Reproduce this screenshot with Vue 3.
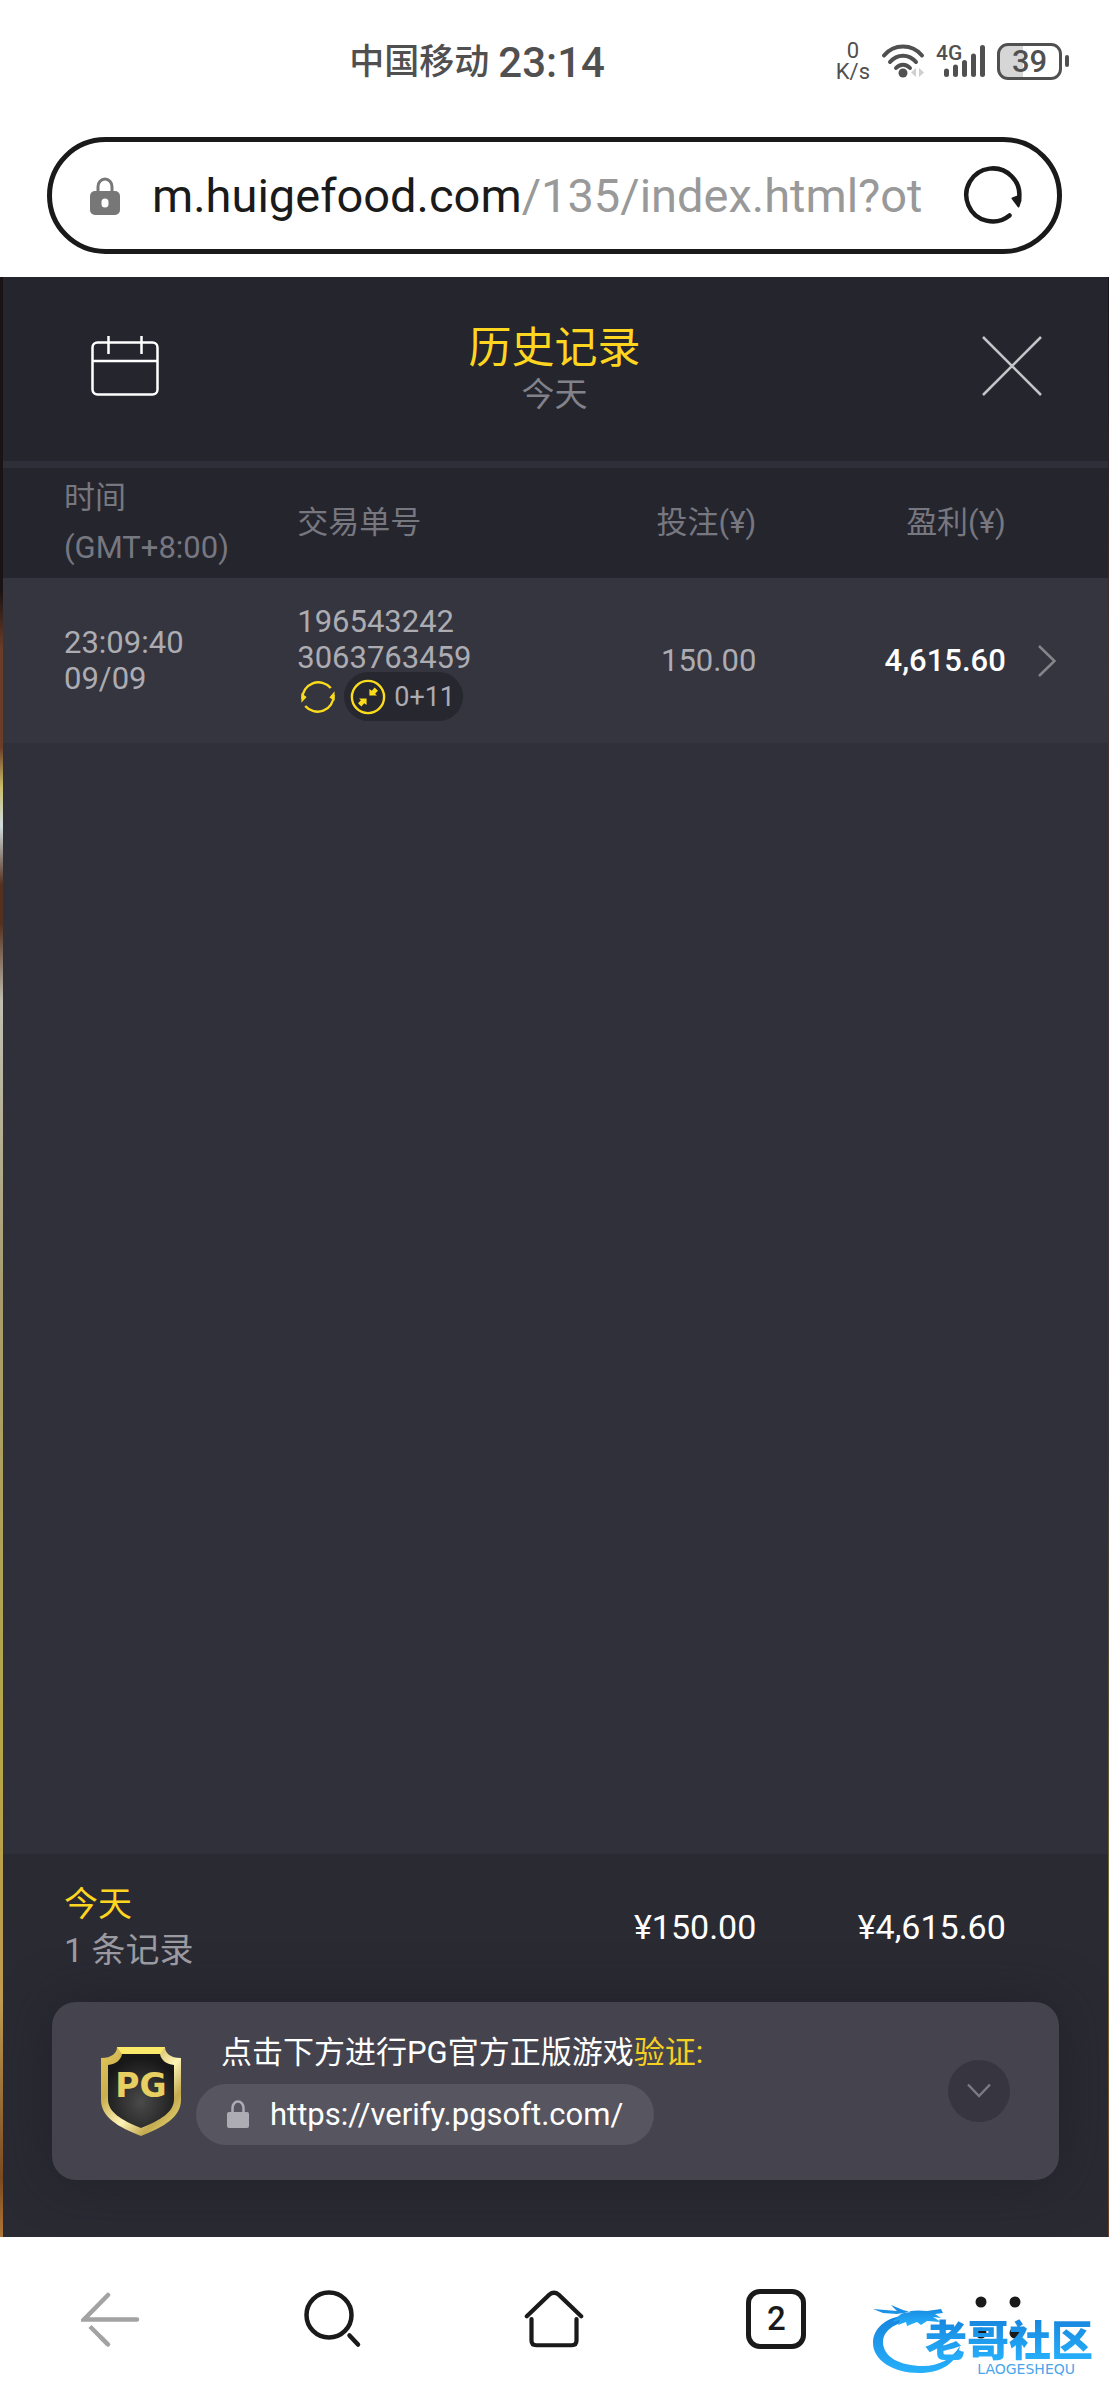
<template>
  <div class="screen">
    <header class="browser-top">
      <div class="status">
        <div class="status-left">
          <span class="carrier">中国移动</span>
          <span class="clock">23:14</span>
        </div>
        <div class="status-right">
          <div class="speed">
            <span>0</span>
            <span>K/s</span>
          </div>
          <svg class="wifi" viewBox="0 0 44 36" aria-hidden="true">
            <g fill="none" stroke="#505050" stroke-width="4" stroke-linecap="round">
              <path d="M3 12.500C13 .5 31 .5 41 12.500" />
              <path d="M9 19c7-8.500 19-8.500 26 0" />
              <path d="M15 25c4-4.500 10-4.500 14 0" />
            </g>
            <circle cx="22" cy="30" r="4.500" fill="#505050" />
            <path d="M35 25v9l-5-4.500zM38 25v9l5-4.500z" fill="#cfcfcf" />
          </svg>
          <div class="signal">
            <span class="signal-type">4G</span>
            <svg class="bars" viewBox="0 0 50 36" aria-hidden="true">
              <g stroke="#505050" stroke-width="5" stroke-linecap="round">
                <path d="M10.500 28v3.500M19.500 24v7.500M28.500 19.500v12M37.500 13v18.500M46.500 4.500v27" />
              </g>
            </svg>
          </div>
          <div class="battery">
            <span class="battery-level">{{ battery }}</span>
          </div>
        </div>
      </div>

      <div class="address">
        <svg class="address-lock" viewBox="0 0 30 38" aria-hidden="true">
          <path d="M8 16V9.500a7 7.500 0 0 1 14 0V16" fill="none" stroke="#777" stroke-width="3" />
          <rect y="14" width="30" height="24" rx="5" fill="#777" />
          <rect x="11.500" y="21.500" width="7" height="9" rx="3.500" fill="#fff" />
        </svg>
        <button class="address-text" type="button">m.huigefood.com<span>/135/index.html?ot</span></button>
        <button class="icon-btn reload" type="button" aria-label="刷新">
          <svg viewBox="0 0 60 60">
            <path d="M46.500 49.500A26.500 26.500 0 1 1 56 33" fill="none" stroke="#1a1a1a" stroke-width="4.500" stroke-linecap="round" />
            <path d="M49.500 32.500l7.500-3 .5 5-2 6z" fill="#1a1a1a" stroke="#1a1a1a" stroke-width="2" stroke-linejoin="round" />
          </svg>
        </button>
      </div>
    </header>

    <main class="game">
      <div class="title-bar">
        <button class="icon-btn calendar" type="button" aria-label="选择日期">
          <svg viewBox="0 0 68 62" fill="none" stroke="#fff" stroke-width="2.500">
            <rect x="1.500" y="7.500" width="65" height="52" rx="5" />
            <path d="M1.500 26h65M17.500 1v18M50.500 1v18" />
          </svg>
        </button>
        <div class="title-text">
          <h1>历史记录</h1>
          <p>今天</p>
        </div>
        <button class="icon-btn close" type="button" aria-label="关闭">
          <svg viewBox="0 0 60 60" stroke="#c4c4c8" stroke-width="2.500">
            <path d="M1 1l58 58M59 1L1 59" />
          </svg>
        </button>
      </div>

      <table class="history">
        <colgroup>
          <col class="col-time" />
          <col class="col-id" />
          <col class="col-bet" />
          <col class="col-profit" />
          <col class="col-more" />
        </colgroup>
        <thead>
          <tr>
            <th class="time">时间<br />(GMT+8:00)</th>
            <th>交易单号</th>
            <th class="num">投注(¥)</th>
            <th class="num">盈利(¥)</th>
            <th></th>
          </tr>
        </thead>
        <tbody>
          <tr v-for="record in records" :key="record.id.join('')">
            <td class="time">{{ record.time }}<br />{{ record.date }}</td>
            <td>
              {{ record.id[0] }}<br />{{ record.id[1] }}
              <div class="tags">
                <svg class="tag-icon" viewBox="0 0 38 38" aria-hidden="true">
                  <g fill="none" stroke="#fbdc1d" stroke-width="2.500">
                    <path d="M32.500 9.500A17 17 0 0 0 2.500 21" />
                    <path d="M5.500 28.500A17 17 0 0 0 35.500 17" />
                  </g>
                  <path d="M1.500 15v10l5.500-6zM36.500 23V13L31 19.500z" fill="#fbdc1d" />
                </svg>
                <span class="spins">
                  <svg class="tag-icon" viewBox="0 0 38 38" aria-hidden="true">
                    <circle cx="19" cy="19" r="17" fill="none" stroke="#fbdc1d" stroke-width="2.500" />
                    <path d="M20.500 17.500v-7l2.500 2L26 9l3.500 3.500-3 3 2 2zM17.500 20.500v7l-2.500-2L12 29l-3.500-3.500 3-3-2-2z" fill="#fbdc1d" />
                  </svg>
                  {{ record.spins }}
                </span>
              </div>
            </td>
            <td class="num">{{ record.bet }}</td>
            <td class="num profit">{{ record.profit }}</td>
            <td class="more">
              <button class="icon-btn detail" type="button" aria-label="详情">
                <svg viewBox="0 0 18 32" fill="none" stroke="#85858c" stroke-width="2.500">
                  <path d="M1 1l15.500 15L1 31" />
                </svg>
              </button>
            </td>
          </tr>
        </tbody>
      </table>

      <div class="empty"></div>

      <footer class="bottom">
        <div class="summary">
          <div class="summary-day">
            <strong>今天</strong>
            <span>{{ records.length }} 条记录</span>
          </div>
          <span class="total">¥150.00</span>
          <span class="total">¥4,615.60</span>
        </div>

        <section class="verify">
          <div class="shield">
            <svg viewBox="0 0 80 90" aria-hidden="true">
              <defs>
                <linearGradient id="gold" x1="0" y1="0" x2="1" y2="1">
                  <stop offset="0" stop-color="#e3c65a" />
                  <stop offset=".3" stop-color="#c9ae4d" />
                  <stop offset=".55" stop-color="#fff4b8" />
                  <stop offset=".75" stop-color="#c4aa50" />
                  <stop offset="1" stop-color="#f6e77f" />
                </linearGradient>
                <radialGradient id="steel" cx=".5" cy=".65" r=".6">
                  <stop offset="0" stop-color="#4a4a4a" />
                  <stop offset="1" stop-color="#181818" />
                </radialGradient>
              </defs>
              <path d="M16 1h48c0 6 5 11 16 11v42c0 17-17 27-40 36C17 81 0 71 0 54V12c11 0 16-5 16-11z" fill="url(#gold)" />
              <path d="M16 1h48l-5 7H21z" fill="#fbe96a" />
              <path d="M21 8h38c1 6 6 10 14 11v34c0 13-13 21-33 29C20 74 7 66 7 53V19c8-1 13-5 14-11z" fill="url(#steel)" />
            </svg>
            <b>PG</b>
          </div>
          <div class="verify-body">
            <p>点击下方进行PG官方正版游戏<em>验证:</em></p>
            <a class="verify-link" href="https://verify.pgsoft.com/">
              <svg viewBox="0 0 22 28" aria-hidden="true">
                <path d="M5.500 13V8a5.500 6.500 0 0 1 11 0v5" fill="none" stroke="#adacb4" stroke-width="2.500" />
                <rect y="12" width="22" height="16" rx="2" fill="#adacb4" />
              </svg>
              https://verify.pgsoft.com/
            </a>
          </div>
          <button class="icon-btn expand" type="button" aria-label="展开">
            <svg viewBox="0 0 24 16" fill="none" stroke="#7b7a84" stroke-width="2.500">
              <path d="M1 1.500l11 11.500L23 1.500" />
            </svg>
          </button>
        </section>
      </footer>
    </main>

    <nav class="toolbar">
      <button class="icon-btn" type="button" aria-label="后退" disabled>
        <svg viewBox="0 0 60 60" fill="none" stroke="#a3a3a3" stroke-width="4.500" stroke-linecap="round">
          <path d="M56 30.500H3L27 6" />
          <path d="M9 37.500l18 18" stroke-linecap="butt" />
          <path d="M20 48.500l7 7" />
        </svg>
      </button>
      <button class="icon-btn" type="button" aria-label="搜索">
        <svg viewBox="0 0 60 60" fill="none" stroke="#1a1a1a" stroke-width="4.500" stroke-linecap="round">
          <circle cx="26" cy="26" r="22.500" />
          <path d="M46.500 46.500l8.500 9" />
        </svg>
      </button>
      <button class="icon-btn" type="button" aria-label="主页">
        <svg viewBox="0 0 64 64" fill="none" stroke="#1a1a1a" stroke-width="4.500" stroke-linecap="round">
          <path d="M3 29L27 6q5-4 10 0l24 23" />
          <path d="M8 32v23q0 5 5 5h38q5 0 5-5V32" />
        </svg>
      </button>
      <button class="icon-btn" type="button" aria-label="标签页">
        <span class="tabs">2</span>
      </button>
      <button class="icon-btn" type="button" aria-label="菜单">
        <svg viewBox="0 0 60 60" fill="#1a1a1a">
          <circle cx="13" cy="13" r="5.500" />
          <circle cx="47" cy="13" r="5.500" />
          <circle cx="13" cy="44" r="5.500" />
          <circle cx="47" cy="44" r="5.500" />
        </svg>
      </button>
    </nav>

    <div class="watermark">
      <svg viewBox="0 0 92 70" aria-hidden="true">
        <defs>
          <linearGradient id="dragon" x1="0" y1="0" x2="0" y2="1">
            <stop offset="0" stop-color="#1583dc" />
            <stop offset="1" stop-color="#27b0fb" />
          </linearGradient>
        </defs>
        <g fill="url(#dragon)">
          <path d="M36 10C14 12 2 24 2 38c0 17 20 30 46 30 22 0 38-10 41-27-8 13-21 20-37 20-23 0-40-9-40-24 0-9 8-18 26-21z" />
          <path d="M32 8l8-1-8-2-12-5 6 6-24-2 10 4 14 1zM30 9c8-4 18-4 26-3l14-2 2 4-8 1 6 4-8-1 8 5-14-1-6 4-4-3-10 4-1-4-8 3 2-5-8 2z" />
        </g>
      </svg>
      <div class="watermark-text">
        <strong>老哥社区</strong>
        <small>LAOGESHEQU</small>
      </div>
    </div>
  </div>
</template>

<script setup>
import { ref } from "vue";

const battery = ref(39);

const records = ref([
  {
    time: "23:09:40",
    date: "09/09",
    id: ["196543242", "3063763459"],
    spins: "0+11",
    bet: "150.00",
    profit: "4,615.60",
  },
]);
</script>

<style>
body {
  margin: 0;
  background: #fff;
}
</style>

<style scoped>
.screen {
  position: relative;
  display: flex;
  flex-direction: column;
  min-height: 100vh;
  font-family: Roboto, "Noto Sans CJK SC", sans-serif;
  font-size: 31px;
  background: #fff;
}
h1,
p {
  margin: 0;
  font-weight: 400;
}
svg {
  display: block;
}
.icon-btn {
  display: flex;
  align-items: center;
  justify-content: center;
  padding: 0;
  border: none;
  background: none;
  color: inherit;
  cursor: pointer;
}

/* status bar + address */
.browser-top {
  padding-bottom: 23px;
}
.status {
  display: flex;
  align-items: center;
  justify-content: space-between;
  height: 122px;
  padding: 0 40px 0 31.5%;
  color: #505050;
}
.status-left {
  display: flex;
  align-items: center;
  gap: 9px;
  padding-top: 4px;
}
.carrier {
  font-size: 35px;
  font-weight: 500;
  line-height: 40px;
}
.clock {
  font-size: 42px;
  font-weight: 500;
  line-height: 40px;
}
.status-right {
  display: flex;
  align-items: center;
  gap: 11px;
}
.speed {
  display: flex;
  flex-direction: column;
  align-items: center;
  font-size: 22px;
  line-height: 21px;
}
.wifi {
  width: 44px;
  height: 36px;
}
.signal {
  position: relative;
}
.signal-type {
  position: absolute;
  top: 0;
  left: 0;
  font-size: 21px;
  font-weight: 500;
  line-height: 20px;
}
.bars {
  width: 50px;
  height: 36px;
}
.battery {
  position: relative;
  display: flex;
  align-items: center;
  justify-content: center;
  box-sizing: border-box;
  width: 65px;
  height: 37px;
  margin-right: 7px;
  border: 3px solid #505050;
  border-radius: 11px;
  background: linear-gradient(90deg, #d6d6d6 39%, #fff 39%);
}
.battery::after {
  content: "";
  position: absolute;
  right: -10px;
  width: 4px;
  height: 12px;
  border-radius: 2px;
  background: #505050;
}
.battery-level {
  font-size: 31px;
  font-weight: 500;
  line-height: 31px;
}
.address {
  display: flex;
  align-items: center;
  box-sizing: border-box;
  height: 117px;
  margin: 15px 47px 0;
  padding: 0 34px 0 38px;
  border: 5px solid #1a1a1a;
  border-radius: 59px;
}
.address-lock {
  width: 30px;
  height: 38px;
  margin-right: 32px;
}
.address-text {
  flex: 1;
  min-width: 0;
  padding: 0;
  border: none;
  background: none;
  overflow: hidden;
  color: #1a1a1a;
  font: inherit;
  font-size: 47px;
  text-align: left;
  white-space: nowrap;
}
.address-text span {
  color: #999;
}
.reload svg {
  width: 60px;
  height: 60px;
}

/* game page */
.game {
  position: relative;
  flex: 1;
  display: flex;
  flex-direction: column;
  background: #30303a;
}
.game::before,
.game::after {
  content: "";
  position: absolute;
  top: 0;
  bottom: 0;
  left: 0;
  width: 3px;
  background: linear-gradient(
    #1a1315 0%,
    #1a1315 16%,
    #6b3d28 19%,
    #6b3d28 24%,
    #c9bc6a 26%,
    #cfdde0 28%,
    #54301f 31%,
    #54301f 33%,
    #c0bfb2 37%,
    #a89c6c 52%,
    #b5a745 75%,
    #c09a50 88%,
    #7a4a20 97%,
    #b07838 100%
  );
}
.game::after {
  right: 0;
  left: auto;
  width: 1px;
  background: linear-gradient(#1a1315, #4a3030 20%, #3a3438 60%, #7a6a30 85%, #6b3d28);
}
.title-bar {
  display: grid;
  grid-template-columns: 1fr auto 1fr;
  align-items: center;
  height: 184px;
  padding: 0 61px;
  border-bottom: 7px solid #2f2f39;
  background: #25252e;
}
.title-text {
  padding-top: 2px;
  text-align: center;
}
.title-text h1 {
  color: #ffd61f;
  font-size: 43px;
  line-height: 50px;
}
.title-text p {
  color: #82828a;
  font-size: 33px;
  line-height: 44px;
}
.calendar,
.close {
  margin-bottom: 6px;
}
.calendar {
  width: 128px;
}
.calendar svg {
  width: 68px;
  height: 62px;
}
.close {
  justify-self: end;
  width: 72px;
}
.close svg {
  width: 60px;
  height: 60px;
}
.history {
  width: 100%;
  border-collapse: collapse;
  table-layout: fixed;
}
.col-time {
  width: 26.8%;
}
.col-id {
  width: 24%;
}
.col-bet {
  width: 17.4%;
}
.col-profit {
  width: 22.5%;
}
.history th,
.history td {
  padding: 0;
  font-weight: 400;
  text-align: left;
  vertical-align: middle;
}
.history th {
  height: 110px;
  background: #25252e;
  color: #777780;
  line-height: 50px;
}
.history td {
  height: 165px;
  background: #35353f;
  color: #acacb2;
  line-height: 36px;
}
.history .time {
  padding-left: 64px;
}
.history .num {
  text-align: right;
}
.history .profit {
  color: #fff;
  font-weight: 500;
}
.history .more {
  padding-left: 32px;
}
.detail svg {
  width: 18px;
  height: 32px;
}
.tags {
  display: flex;
  align-items: center;
  gap: 8px;
  height: 41px;
  padding-left: 3px;
}
.tag-icon {
  width: 36px;
  height: 36px;
}
.spins {
  display: flex;
  align-items: center;
  gap: 8px;
  height: 49px;
  padding: 0 8px 0 6px;
  border-radius: 25px;
  background: #27272f;
  font-size: 27px;
}
.empty {
  flex: 1;
}
.bottom {
  padding: 27px 0 57px;
  background: #2a2a33;
}
.summary {
  display: grid;
  grid-template-columns: 50.8% 17.4% 22.5%;
  align-items: center;
  font-size: 34px;
  line-height: 46px;
}
.summary-day {
  display: flex;
  flex-direction: column;
  padding-left: 64px;
}
.summary-day strong {
  color: #ffd61f;
  font-weight: 400;
}
.summary-day span {
  color: #9a9aa0;
}
.total {
  color: #fff;
  text-align: right;
}
.verify {
  display: flex;
  align-items: center;
  box-sizing: border-box;
  min-height: 178px;
  margin: 29px 50px 0 52px;
  padding: 0 49px;
  border-radius: 24px;
  background: #44434e;
  box-shadow: 0 0 50px rgba(28, 28, 36, .6);
}
.shield {
  position: relative;
  width: 80px;
  height: 90px;
}
.shield b {
  position: absolute;
  top: 22px;
  left: 0;
  width: 80px;
  color: #e8cf62;
  font-family: "DejaVu Sans", sans-serif;
  font-size: 33px;
  line-height: 36px;
  text-align: center;
}
.verify-body {
  flex: 1;
  display: flex;
  flex-direction: column;
  align-items: flex-start;
  gap: 8px;
  padding: 0 0 8px 15px;
  color: #fff;
}
.verify-body p {
  padding-left: 25px;
  line-height: 46px;
}
.verify-body em {
  color: #f5d020;
  font-style: normal;
}
.verify-link {
  display: flex;
  align-items: center;
  gap: 21px;
  height: 61px;
  padding: 0 31px;
  border-radius: 31px;
  background: #575660;
  color: #fff;
  text-decoration: none;
}
.verify-link svg {
  width: 22px;
  height: 28px;
}
.expand {
  width: 62px;
  height: 62px;
  border-radius: 50%;
  background: #363540;
}
.expand svg {
  width: 24px;
  height: 16px;
}

/* browser toolbar */
.toolbar {
  display: grid;
  grid-template-columns: repeat(5, 1fr);
  height: 163px;
}
.toolbar svg {
  width: 60px;
  height: 60px;
}
.tabs {
  box-sizing: border-box;
  width: 60px;
  height: 60px;
  border: 5px solid #1a1a1a;
  border-radius: 14px;
  color: #1a1a1a;
  font-family: Roboto, sans-serif;
  font-size: 33px;
  font-weight: 500;
  line-height: 50px;
  text-align: center;
}

/* community logo over the toolbar */
.watermark {
  position: absolute;
  right: 16px;
  bottom: 25px;
  width: 222px;
  height: 70px;
  pointer-events: none;
}
.watermark svg {
  width: 92px;
  height: 70px;
}
.watermark-text {
  position: absolute;
  top: 10px;
  right: 0;
  display: flex;
  flex-direction: column;
  align-items: flex-end;
}
.watermark strong {
  background: linear-gradient(#1583dc, #27b0fb);
  background-clip: text;
  color: transparent;
  font-family: "Noto Sans CJK SC", sans-serif;
  font-size: 42px;
  font-weight: 900;
  line-height: 46px;
}
.watermark small {
  padding-right: 18px;
  color: #4aa5ea;
  font-family: "DejaVu Sans", sans-serif;
  font-size: 14px;
  line-height: 16px;
}
</style>
